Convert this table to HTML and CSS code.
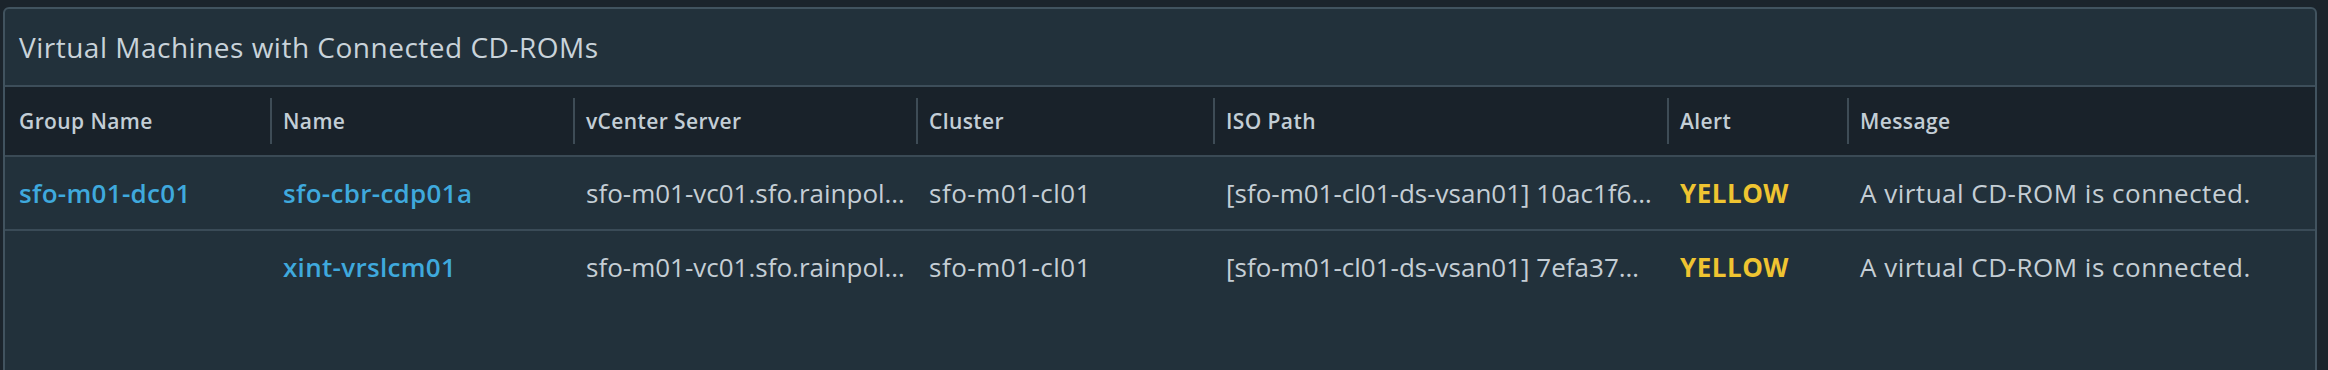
FILE: index.html
```html
<!DOCTYPE html>
<html lang="en">
<head>
    <meta charset="UTF-8">
    <title>Virtual Machines with Connected CD-ROMs</title>
    <link rel="stylesheet" href="styles.css">
</head>
<body>
    <div class="panel">
        <div class="panel-title">Virtual Machines with Connected CD-ROMs</div>
        <table class="grid">
            <colgroup>
                <col class="c-group">
                <col class="c-name">
                <col class="c-vc">
                <col class="c-cluster">
                <col class="c-iso">
                <col class="c-alert">
                <col class="c-msg">
            </colgroup>
            <thead>
                <tr>
                    <th class="first">Group Name</th>
                    <th>Name</th>
                    <th>vCenter Server</th>
                    <th>Cluster</th>
                    <th>ISO Path</th>
                    <th>Alert</th>
                    <th>Message</th>
                </tr>
            </thead>
            <tbody>
                <tr>
                    <td class="first link">sfo-m01-dc01</td>
                    <td class="link">sfo-cbr-cdp01a</td>
                    <td class="trunc">sfo-m01-vc01.sfo.rainpol…</td>
                    <td>sfo-m01-cl01</td>
                    <td class="trunc">[sfo-m01-cl01-ds-vsan01] 10ac1f6…</td>
                    <td class="alert">YELLOW</td>
                    <td>A virtual CD-ROM is connected.</td>
                </tr>
                <tr>
                    <td class="first link"></td>
                    <td class="link">xint-vrslcm01</td>
                    <td class="trunc">sfo-m01-vc01.sfo.rainpol…</td>
                    <td>sfo-m01-cl01</td>
                    <td class="trunc">[sfo-m01-cl01-ds-vsan01] 7efa37…</td>
                    <td class="alert">YELLOW</td>
                    <td>A virtual CD-ROM is connected.</td>
                </tr>
            </tbody>
        </table>
    </div>
</body>
</html>
```

FILE: styles.css
```css
body {
    margin: 0;
    height: 370px;
    overflow: hidden;
    background-color: #1b242c;
    font-family: "Open Sans", "Liberation Sans", sans-serif;
}

.panel {
    margin: 7px 11px 0 3px;
    height: 420px;
    background-color: #22313b;
    border: 2px solid #41535f;
    border-radius: 6px 6px 0 0;
}

.panel-title {
    height: 76px;
    display: flex;
    align-items: center;
    padding-left: 14px;
    color: #c9d3da;
    font-size: 28px;
    letter-spacing: 0.5px;
    border-bottom: 2px solid #3d4e5a;
}

.grid {
    width: 100%;
    table-layout: fixed;
    border-collapse: collapse;
}

.c-group { width: 265px; }
.c-name { width: 303px; }
.c-vc { width: 343px; }
.c-cluster { width: 297px; }
.c-iso { width: 454px; }
.c-alert { width: 180px; }

th, td {
    text-align: left;
    white-space: nowrap;
    overflow: hidden;
    padding: 0 0 0 13px;
}

th {
    position: relative;
    height: 68px;
    background-color: #19222a;
    color: #c3ced6;
    font-size: 21px;
    font-weight: 600;
    letter-spacing: 0.4px;
    border-bottom: 2px solid #3a4a55;
}

th::before {
    content: "";
    position: absolute;
    left: 0;
    top: 11px;
    bottom: 11px;
    width: 2px;
    background-color: #3e4c56;
}

th.first::before {
    display: none;
}

td {
    height: 72px;
    color: #c5ced5;
    font-size: 26px;
    letter-spacing: 0.5px;
    border-bottom: 2px solid #3a4b57;
}

tbody tr:last-child td {
    border-bottom: none;
}

td.trunc {
    letter-spacing: 0;
}

.first {
    padding-left: 14px;
}

.link {
    color: #3fa9dd;
    font-weight: 600;
    letter-spacing: 0.3px;
}

.alert {
    color: #efc431;
    font-weight: 700;
}
```
